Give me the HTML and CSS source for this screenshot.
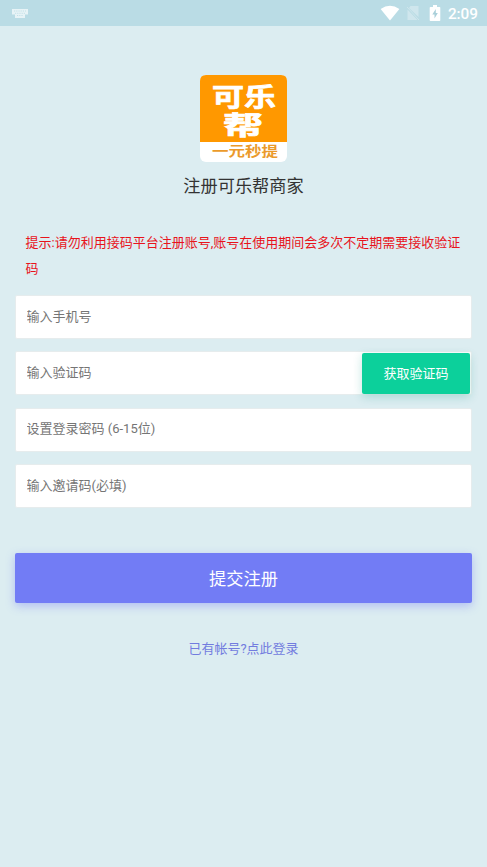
FILE: index.html
```html
<!DOCTYPE html>
<html lang="zh-CN">
<head>
<meta charset="utf-8">
<meta name="viewport" content="width=device-width, initial-scale=1">
<title>注册可乐帮商家</title>
<link rel="stylesheet" href="styles.css">
</head>
<body>
<header class="status">
  <svg class="keyboard" width="16" height="9" viewBox="0 0 16 9">
    <path d="M0 0h16v5.500h-3V9H3V5.500H0z" fill="#fff" opacity=".65"/>
    <path d="M2 2h12M3 4.300h10M5 6.500h6" stroke="#badce5" stroke-width=".8" stroke-dasharray="1.200 1"/>
  </svg>
  <div class="indicators">
    <svg width="20" height="16" viewBox="0 0 20 16"><path d="M.6 4Q10-2.600 19.400 4L10 15.500z" fill="#fff"/></svg>
    <svg class="sim" width="14" height="16" viewBox="0 0 14 16">
      <path d="M4.500 1H12.500V12L3 3zM1.500 4.500L11.500 15H1.500z" fill="#fff" opacity=".3"/>
      <path d="M1 2L13 15" stroke="#fff" opacity=".3"/>
    </svg>
    <svg class="battery" width="12" height="16" viewBox="0 0 12 16">
      <path d="M4 0h4v2h2.500q.8 0 .8.800V15.200q0 .8-.8.800h-9q-.8 0-.8-.8V2.800q0-.8.8-.8H4z" fill="#fff"/>
      <path d="M6.800 4L3.300 9.500h2.200V13.500L8.800 8H6.800z" fill="#a9cfd9"/>
    </svg>
    <span class="clock">2:09</span>
  </div>
</header>
<main class="page">
  <svg class="logo" width="87" height="87" viewBox="0 0 87 87">
    <rect width="87" height="87" rx="6" fill="#fff"/>
    <path d="M0 67V6Q0 0 6 0H81Q87 0 87 6V67z" fill="#ff9800"/>
    <g class="logo-text">
      <text x="12" y="30.800" font-size="25" textLength="64" lengthAdjust="spacingAndGlyphs" fill="#fff" stroke="#fff" stroke-width=".7">可乐</text>
      <text x="23" y="59.700" font-size="26" textLength="40" lengthAdjust="spacingAndGlyphs" fill="#fff" stroke="#fff" stroke-width=".7">帮</text>
      <text x="12" y="81" font-size="13.500" textLength="66" lengthAdjust="spacingAndGlyphs" fill="#eb9a2b">一元秒提</text>
    </g>
  </svg>
  <h1 class="title">注册可乐帮商家</h1>
  <p class="notice">提示:请勿利用接码平台注册账号,账号在使用期间会多次不定期需要接收验证码</p>
  <form class="form">
    <input class="field" type="tel" placeholder="输入手机号">
    <div class="code-row">
      <input class="field" type="text" placeholder="输入验证码">
      <button class="code-button" type="button">获取验证码</button>
    </div>
    <input class="field" type="password" placeholder="设置登录密码 (6-15位)">
    <input class="field" type="text" placeholder="输入邀请码(必填)">
    <button class="submit" type="button">提交注册</button>
  </form>
  <a class="login">已有帐号?点此登录</a>
</main>
</body>
</html>
```
FILE: styles.css
```css
* { box-sizing: border-box; }
body {
  margin: 0;
  min-height: 867px;
  background: #dcedf1;
  font-family: Roboto, "Noto Sans CJK SC", sans-serif;
  font-size: 13px;
  color: #333;
}
.status {
  display: flex;
  justify-content: space-between;
  align-items: center;
  height: 26px;
  padding: 0 9px 0 12px;
  background: #badce5;
}
.indicators { display: flex; align-items: center; }
.sim { margin-left: 6px; }
.battery { margin-left: 9px; }
.clock {
  margin-left: 7px;
  font-size: 15.300px;
  line-height: 26px;
  font-weight: 500;
  color: #fff;
  position: relative;
  top: 1px;
}
.page {
  display: flex;
  flex-direction: column;
  align-items: center;
  padding: 49px 15px 0;
}
.logo { display: block; }
.logo-text { font-family: "Noto Sans CJK SC", sans-serif; font-weight: 700; }
.title {
  margin: 11px 0 0;
  font-size: 17.200px;
  line-height: 26px;
  font-weight: 400;
}
.notice {
  width: 100%;
  margin: 31px 0 0;
  padding: 0 10px 0 10.500px;
  line-height: 26px;
  color: #e8141c;
}
.form {
  display: flex;
  flex-direction: column;
  gap: 12.400px;
  width: 100%;
  margin-top: 13px;
}
.field {
  display: block;
  width: 100%;
  height: 44px;
  padding: 0 10.500px 2px;
  border: 1px solid #e6eced;
  border-radius: 2px;
  background: #fff;
  font: inherit;
  outline: 0;
}
.field::placeholder { color: #757575; opacity: 1; }
.code-row { position: relative; }
.code-button {
  position: absolute;
  top: 1.500px;
  right: 2px;
  width: 108px;
  height: 41px;
  padding: 0 0 2px;
  border: 0;
  border-radius: 2px;
  background: #0cd09b;
  box-shadow: 0 3px 10px rgba(12, 150, 130, .24);
  color: #fff;
  font: inherit;
}
.submit {
  height: 50px;
  margin: 32.500px 0 0;
  padding: 0 0 2px;
  border: 0;
  border-radius: 2px;
  background: #727cf5;
  box-shadow: 0 3px 10px rgba(114, 124, 245, .42);
  color: #fff;
  font: inherit;
  font-size: 17.200px;
}
.login {
  margin-top: 36px;
  line-height: 20px;
  color: #727cdf;
}
```
